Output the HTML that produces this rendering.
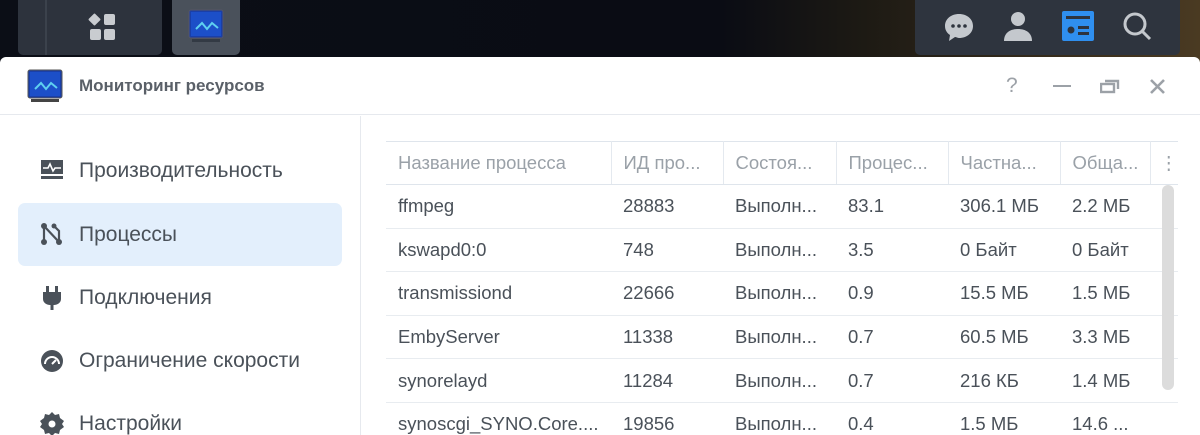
<!DOCTYPE html>
<html><head><meta charset="utf-8"><style>
*{margin:0;padding:0;box-sizing:border-box}
html,body{width:1200px;height:435px;overflow:hidden}
body{background:linear-gradient(90deg,#0b0e16 0%,#0a0c14 60%,#1d1a14 72%,#4a3a22 100%);font-family:"Liberation Sans",sans-serif;position:relative}
.tb{position:absolute;top:0;height:55px;border-radius:0 0 5px 5px}
.win{position:absolute;left:0;top:57px;width:1200px;height:378px;background:#fff;border-radius:6px 6px 0 0;overflow:hidden}
.hdr{height:58px;border-bottom:1px solid #e6e9ee;position:relative}
.title{position:absolute;left:79px;top:19px;font-size:17px;font-weight:bold;color:#5a6068}
.side{position:absolute;left:0;top:59px;width:361px;height:320px;border-right:1px solid #e6e9ee}
.it{position:absolute;left:18px;width:324px;height:63px;border-radius:7px;font-size:21px;color:#4a5159;padding-left:61px;line-height:63px}
.it svg{position:absolute;left:22px;top:20px}
.sel{background:#e3effc}
table{position:absolute;left:386px;top:84px;border-collapse:collapse;font-size:18.5px;color:#4a5159;table-layout:fixed}
th{font-weight:normal;color:#9aa1a8;text-align:left;height:43px;border-top:1px solid #dfe5ec;border-bottom:1px solid #dfe5ec;border-right:1px solid #e4e9ef;padding-left:12px;white-space:nowrap;overflow:hidden}
td{height:43.6px;border-bottom:1px solid #e8ecf0;padding-left:12px;white-space:nowrap;overflow:hidden}
</style></head><body>
<div class="tb" style="left:18px;width:144px;background:#2d333d"><div style="position:absolute;left:27px;top:0;width:2px;height:55px;background:#3b424c"></div>
<svg style="position:absolute;left:70px;top:13px" width="30" height="30" viewBox="0 0 30 30" fill="#c9ccd0"><rect x="2" y="2" width="9" height="9" transform="rotate(45 6.5 6.5)" rx="1"/><rect x="16" y="1" width="11" height="11" rx="2"/><rect x="2" y="16" width="11" height="11" rx="2"/><rect x="16" y="16" width="11" height="11" rx="2"/></svg></div>
<div class="tb" style="left:172px;width:68px;background:#4a515b">
<svg style="position:absolute;left:16px;top:9px" width="36" height="34" viewBox="0 0 36 34"><rect x="1" y="1" width="34" height="28" rx="2" fill="#1a3fa8" stroke="#556" /><rect x="3" y="3" width="30" height="24" fill="#1c4fc8"/><path d="M8 20l6-6 5 6 5-6 6 5" stroke="#5ed0f0" stroke-width="2" fill="none"/><rect x="4" y="30" width="28" height="3" fill="#333a44"/></svg></div>
<div class="tb" style="left:915px;width:265px;background:#2e343e">
<svg style="position:absolute;left:28px;top:11px" width="32" height="32" viewBox="0 0 32 32"><path d="M16 3C8 3 2 8 2 15c0 4 2 7 5 9l-1 6 6-4c1 0 3 1 4 1 8 0 14-5 14-12S24 3 16 3z" fill="#c4c8cd"/><circle cx="10" cy="15" r="1.8" fill="#2e343e"/><circle cx="16" cy="15" r="1.8" fill="#2e343e"/><circle cx="22" cy="15" r="1.8" fill="#2e343e"/></svg>
<svg style="position:absolute;left:87px;top:10px" width="32" height="32" viewBox="0 0 32 32" fill="#c4c8cd"><circle cx="16" cy="9" r="7"/><path d="M2 31c0-8 6-12 14-12s14 4 14 12z"/></svg>
<svg style="position:absolute;left:146px;top:10px" width="34" height="32" viewBox="0 0 34 32"><rect x="1" y="1" width="32" height="30" rx="2" fill="#2f8fef"/><rect x="5" y="6" width="24" height="3" fill="#2e343e"/><circle cx="10" cy="20" r="3.5" fill="#2e343e"/><rect x="17" y="16" width="11" height="3" fill="#2e343e"/><rect x="17" y="22" width="11" height="3" fill="#2e343e"/></svg>
<svg style="position:absolute;left:206px;top:10px" width="32" height="32" viewBox="0 0 32 32" fill="none" stroke="#c4c8cd" stroke-width="3"><circle cx="14" cy="14" r="10"/><path d="M21 21l8 8"/></svg></div>
<div class="win">
<div class="hdr">
<svg style="position:absolute;left:27px;top:12px" width="36" height="34" viewBox="0 0 36 34"><rect x="1" y="1" width="34" height="28" rx="2" fill="#1a3fa8" stroke="#555"/><rect x="3" y="3" width="30" height="24" fill="#1c4fc8"/><path d="M8 20l6-6 5 6 5-6 6 5" stroke="#5ed0f0" stroke-width="2" fill="none"/><rect x="4" y="30" width="28" height="3" fill="#444"/></svg>
<div class="title">Мониторинг ресурсов</div>
<div style="position:absolute;left:1006px;top:17px;font-size:21px;color:#9ca1a7">?</div>
<div style="position:absolute;left:1053px;top:28px;width:18px;height:2px;background:#9ca1a7"></div>
<svg style="position:absolute;left:1100px;top:21px" width="20" height="16" viewBox="0 0 20 16" fill="none" stroke="#9ca1a7" stroke-width="2.4"><rect x="1" y="6" width="13" height="8"/><path d="M5 3h13v8"/></svg>
<svg style="position:absolute;left:1149px;top:21px" width="17" height="17" viewBox="0 0 17 17" stroke="#9ca1a7" stroke-width="2.6"><path d="M2 2l13 13M15 2L2 15"/></svg>
</div>
<div class="side">
<div class="it" style="top:23px"><svg width="24" height="22" viewBox="0 0 24 22"><rect x="1" y="1" width="22" height="14" fill="#4a5159"/><path d="M3 9h5l2-4 3 7 2-3h6" stroke="#fff" stroke-width="1.6" fill="none"/><rect x="1" y="17" width="22" height="3" fill="#4a5159"/></svg>Производительность</div>
<div class="it sel" style="top:87px"><svg width="24" height="22" viewBox="0 0 24 22" fill="#4a5159"><circle cx="4" cy="3" r="3"/><circle cx="4" cy="19" r="3"/><circle cx="19" cy="19" r="3"/><circle cx="14" cy="3" r="2.5"/><path d="M4 3v16M4 3l15 16M14 3l5 5v11" stroke="#4a5159" stroke-width="2.2" fill="none"/></svg>Процессы</div>
<div class="it" style="top:150px"><svg width="24" height="24" viewBox="0 0 24 24" fill="#4a5159"><rect x="6" y="0" width="3" height="6"/><rect x="15" y="0" width="3" height="6"/><path d="M3 6h18v7c0 4-4 6-7 6h-4c-3 0-7-2-7-6z"/><rect x="10.5" y="18" width="3" height="6"/></svg>Подключения</div>
<div class="it" style="top:213px"><svg width="24" height="24" viewBox="0 0 24 24"><circle cx="12" cy="12" r="11" fill="#4a5159"/><path d="M5 15a7 7 0 0 1 14 0" stroke="#fff" stroke-width="2" fill="none"/><path d="M12 15l4-4" stroke="#fff" stroke-width="2"/></svg>Ограничение скорости</div>
<div class="it" style="top:276px"><svg width="24" height="24" viewBox="0 0 24 24"><path d="M12 0l3 3 4-1 1 4 4 3-2 3 2 3-4 3-1 4-4-1-3 3-3-3-4 1-1-4-4-3 2-3-2-3 4-3 1-4 4 1z" fill="#4a5159"/><circle cx="12" cy="12" r="3.5" fill="#fff"/></svg>Настройки</div>
</div>
<table>
<colgroup><col style="width:225px"><col style="width:112px"><col style="width:113px"><col style="width:112px"><col style="width:112px"><col style="width:90px"><col style="width:25px"></colgroup>
<tr><th>Название процесса</th><th>ИД про...</th><th>Состоя...</th><th>Процес...</th><th>Частна...</th><th>Обща...</th><th style="border-right:none;padding-left:9px">⋮</th></tr>
<tr><td>ffmpeg</td><td>28883</td><td>Выполн...</td><td>83.1</td><td>306.1 МБ</td><td>2.2 МБ</td><td></td></tr>
<tr><td>kswapd0:0</td><td>748</td><td>Выполн...</td><td>3.5</td><td>0 Байт</td><td>0 Байт</td><td></td></tr>
<tr><td>transmissiond</td><td>22666</td><td>Выполн...</td><td>0.9</td><td>15.5 МБ</td><td>1.5 МБ</td><td></td></tr>
<tr><td>EmbyServer</td><td>11338</td><td>Выполн...</td><td>0.7</td><td>60.5 МБ</td><td>3.3 МБ</td><td></td></tr>
<tr><td>synorelayd</td><td>11284</td><td>Выполн...</td><td>0.7</td><td>216 КБ</td><td>1.4 МБ</td><td></td></tr>
<tr><td>synoscgi_SYNO.Core....</td><td>19856</td><td>Выполн...</td><td>0.4</td><td>1.5 МБ</td><td>14.6 ...</td><td></td></tr>
</table>
<div style="position:absolute;left:1162px;top:128px;width:12px;height:205px;border-radius:6px;background:#dcdcdc"></div>
</div>
</body></html>
